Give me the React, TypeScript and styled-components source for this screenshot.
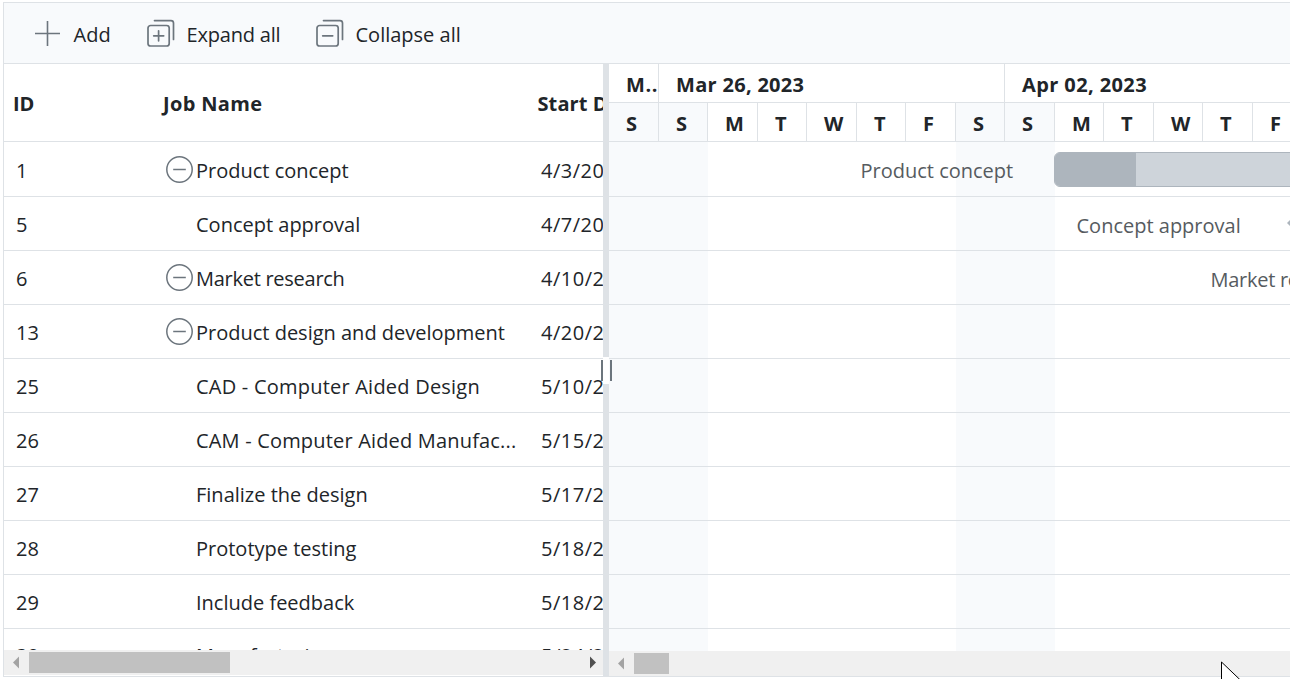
import React from 'react';
import styled, { createGlobalStyle } from 'styled-components';

const LINE = '#dee2e6';
const TINT = '#f8fafc';
const INK = '#212529';
const ICON = '#6c757d';

const GlobalStyle = createGlobalStyle`
  * { box-sizing: border-box; }
  html, body { margin: 0; background: #fff; overflow: hidden; }
  body { font-family: 'Open Sans', 'Noto Sans', sans-serif; font-size: 20px; color: ${INK}; }
`;

const Page = styled.div`
  width: 1290px;
  height: 679px;
  padding: 2px 0 0 3px;
  overflow: hidden;
`;

const Gantt = styled.div`
  width: 1300px;
  height: 675px;
  border: 1px solid ${LINE};
  display: flex;
  flex-direction: column;
`;

const Toolbar = styled.div`
  height: 61px;
  flex: none;
  display: flex;
  align-items: center;
  padding-left: 30px;
  background: ${TINT};
  border-bottom: 1px solid ${LINE};
`;

const Label = styled.span<{ $spacing?: number }>`
  white-space: nowrap;
  letter-spacing: ${(p) => p.$spacing ?? 0}px;
  line-height: 28px;
`;

const ToolButton = styled.button<{ $width: number }>`
  width: ${(p) => p.$width}px;
  height: 40px;
  flex: none;
  display: flex;
  align-items: center;
  gap: 11.5px;
  padding: 0;
  border: 0;
  background: none;
  color: inherit;
  font: inherit;
  svg { flex: none; display: block; }
  ${Label} { padding-top: 3px; }
`;

const Panes = styled.div`
  flex: 1;
  min-height: 0;
  display: flex;
`;

const GridPane = styled.div`
  width: 599px;
  flex: none;
  display: flex;
  flex-direction: column;
  padding-bottom: 1px;
  overflow: hidden;
`;

const GridHeader = styled.div`
  height: 78px;
  flex: none;
  display: grid;
  grid-template-columns: 150px 374.5px 150px;
  align-items: center;
  padding: 3px 0 0 9px;
  border-bottom: 1px solid ${LINE};
  font-weight: 700;
`;

const Rows = styled.div`
  flex: 1;
  min-height: 0;
  overflow: hidden;
`;

const GridRow = styled.div`
  height: 54px;
  display: grid;
  grid-template-columns: 149px 376px 150px;
  align-items: center;
  padding: 2px 0 0 12px;
  border-bottom: 1px solid ${LINE};
  &:first-child { height: 55px; padding-top: 3px; }
  &:last-child { padding-top: 0; }
`;

const NameCell = styled.div`
  display: flex;
  align-items: center;
`;

const Toggle = styled.span`
  width: 31px;
  height: 28px;
  margin-top: -3px;
  flex: none;
`;

const ScrollTrack = styled.div`
  height: 25px;
  flex: none;
  display: flex;
  align-items: center;
  background: #f0f0f0;
`;

const ScrollArrow = styled.svg<{ $width: number }>`
  width: ${(p) => p.$width}px;
  height: 25px;
  flex: none;
  display: block;
`;

const Thumb = styled.div<{ $width: number }>`
  width: ${(p) => p.$width}px;
  height: 21px;
  flex: none;
  background: #c1c1c1;
`;

const Spacer = styled.div`
  flex: 1;
`;

const Splitter = styled.div`
  position: relative;
  width: 6px;
  flex: none;
  background: ${LINE};
`;

const Grip = styled.div`
  position: absolute;
  left: -2px;
  top: 293px;
  width: 11px;
  height: 27px;
  display: flex;
  justify-content: space-between;
  align-items: center;
  background: linear-gradient(#fff, #fff) 2px 0 / 6px 27px no-repeat;
`;

const GripBar = styled.i`
  width: 2px;
  height: 21px;
  background: ${ICON};
`;

const ChartPane = styled.div`
  flex: 1;
  min-width: 0;
  display: flex;
  flex-direction: column;
  overflow: hidden;
`;

const HeaderTier = styled.div`
  height: 39px;
  flex: none;
  display: flex;
  border-bottom: 1px solid ${LINE};
  font-weight: 700;
`;

const WeekCell = styled.div<{ $width: number }>`
  width: ${(p) => p.$width}px;
  flex: none;
  display: flex;
  align-items: center;
  padding: 4px 0 0 17px;
  overflow: hidden;
  border-right: 1px solid ${LINE};
`;

const DayCell = styled.div<{ $wide: boolean; $weekend: boolean }>`
  width: ${(p) => (p.$wide ? 50 : 49)}px;
  flex: none;
  display: flex;
  align-items: center;
  padding: 3px 0 0 17px;
  border-right: 1px solid ${LINE};
  background: ${(p) => (p.$weekend ? TINT : '#fff')};
`;

const ChartRows = styled(Rows)`
  background:
    linear-gradient(${TINT}, ${TINT}) 0 0 / 99px 100% no-repeat,
    linear-gradient(${TINT}, ${TINT}) 347px 0 / 99px 100% no-repeat,
    #fff;
`;

const ChartRow = styled.div<{ $first?: boolean; $indent: number }>`
  height: ${(p) => (p.$first ? 55 : 54)}px;
  display: flex;
  align-items: center;
  padding: ${(p) => (p.$first ? 3 : 5)}px 0 0 ${(p) => p.$indent}px;
  border-bottom: 1px solid ${LINE};
  color: #565b60;
`;

const TaskLabel = styled.div<{ $width: number }>`
  width: ${(p) => p.$width}px;
  flex: none;
  display: flex;
`;

const TaskBar = styled.div`
  width: 280px;
  height: 35px;
  margin-top: -3px;
  flex: none;
  overflow: hidden;
  border: 1px solid #adb5bd;
  border-radius: 6px;
  background: #ced4da;
`;

const Progress = styled.div`
  width: 81px;
  height: 100%;
  background: #adb5bd;
`;

const Milestone = styled.div`
  width: 24px;
  height: 24px;
  margin-top: -7px;
  flex: none;
  transform: rotate(45deg);
  background: #adb5bd;
`;

const Pointer = styled.svg`
  position: absolute;
  left: 1220px;
  top: 661px;
  width: 22px;
  height: 18px;
`;

const AddIcon = () => (
  <svg width="28" height="28" fill="none" stroke={ICON} strokeWidth="1.6">
    <path d="M1 14.5H26M13.5 2V27" />
  </svg>
);

const StackIcon = ({ plus }: { plus?: boolean }) => (
  <svg width="28" height="28" fill="none" stroke={ICON} strokeWidth="1.7" strokeLinecap="round">
    <rect x="1" y="6.5" width="21.2" height="20.5" rx="2.6" />
    <path d="M7.5 1.6H24Q26.5 1.6 26.5 4.1V20.4" />
    <path d={plus ? 'M6.7 16.8H16.7M11.6 11.8V21.8' : 'M6.7 16.8H16.7'} />
  </svg>
);

const CollapseIcon = () => (
  <svg width="28" height="28" fill="none" stroke={ICON} strokeWidth="1.5">
    <circle cx="14.5" cy="14.5" r="12.7" />
    <path d="M8.2 14.5H20.8" />
  </svg>
);

interface Job {
  id: number;
  name: string;
  start: string;
  parent?: boolean;
  spacing?: number;
}

const jobs: Job[] = [
  { id: 1, name: 'Product concept', start: '4/3/2023', parent: true },
  { id: 5, name: 'Concept approval', start: '4/7/2023' },
  { id: 6, name: 'Market research', start: '4/10/2023', parent: true, spacing: -0.27 },
  { id: 13, name: 'Product design and development', start: '4/20/2023', parent: true },
  { id: 25, name: 'CAD - Computer Aided Design', start: '5/10/2023', spacing: 0.22 },
  { id: 26, name: 'CAM - Computer Aided Manufac...', start: '5/15/2023', spacing: 0.18 },
  { id: 27, name: 'Finalize the design', start: '5/17/2023' },
  { id: 28, name: 'Prototype testing', start: '5/18/2023' },
  { id: 29, name: 'Include feedback', start: '5/18/2023' },
  { id: 30, name: 'Manufacturing', start: '5/24/2023' },
];

const days = ['S', 'S', 'M', 'T', 'W', 'T', 'F', 'S', 'S', 'M', 'T', 'W', 'T', 'F', 'S'];

export default function App() {
  return (
    <Page>
      <GlobalStyle />
      <Gantt>
        <Toolbar>
          <ToolButton $width={113}><AddIcon /><Label>Add</Label></ToolButton>
          <ToolButton $width={169}><StackIcon plus /><Label $spacing={-0.2}>Expand all</Label></ToolButton>
          <ToolButton $width={160}><StackIcon /><Label>Collapse all</Label></ToolButton>
        </Toolbar>
        <Panes>
          <GridPane>
            <GridHeader>
              <Label>ID</Label>
              <Label $spacing={0.35}>Job Name</Label>
              <Label $spacing={0.1}>Start Date</Label>
            </GridHeader>
            <Rows>
              {jobs.map((job) => (
                <GridRow key={job.id}>
                  <Label>{job.id}</Label>
                  <NameCell>
                    <Toggle>{job.parent && <CollapseIcon />}</Toggle>
                    <Label $spacing={job.spacing}>{job.name}</Label>
                  </NameCell>
                  <Label $spacing={0.5}>{job.start}</Label>
                </GridRow>
              ))}
            </Rows>
            <ScrollTrack>
              <ScrollArrow $width={25} viewBox="0 0 25 25"><path d="M9 12.5L15 6.5V18.5Z" fill="#a3a3a3" /></ScrollArrow>
              <Thumb $width={201} />
              <Spacer />
              <ScrollArrow $width={18} viewBox="0 0 18 25"><path d="M11 12.5L5 6.5V18.5Z" fill="#505050" /></ScrollArrow>
            </ScrollTrack>
          </GridPane>
          <Splitter>
            <Grip><GripBar /><GripBar /></Grip>
          </Splitter>
          <ChartPane>
            <HeaderTier>
              <WeekCell $width={50}><Label $spacing={0.6}>M..</Label></WeekCell>
              <WeekCell $width={346}><Label $spacing={0.3}>Mar 26, 2023</Label></WeekCell>
              <WeekCell $width={346}><Label $spacing={0.4}>Apr 02, 2023</Label></WeekCell>
            </HeaderTier>
            <HeaderTier>
              {days.map((day, i) => (
                <DayCell key={i} $wide={i % 2 === 0} $weekend={day === 'S'}><Label>{day}</Label></DayCell>
              ))}
            </HeaderTier>
            <ChartRows>
              <ChartRow $first $indent={251.5}>
                <TaskLabel $width={193.5}><Label>Product concept</Label></TaskLabel>
                <TaskBar><Progress /></TaskBar>
              </ChartRow>
              <ChartRow $indent={467.5}>
                <TaskLabel $width={215.5}><Label>Concept approval</Label></TaskLabel>
                <Milestone />
              </ChartRow>
              <ChartRow $indent={601.5}>
                <TaskLabel $width={160}><Label $spacing={-0.27}>Market research</Label></TaskLabel>
              </ChartRow>
              {jobs.slice(3).map((job) => (
                <ChartRow key={job.id} $indent={0} />
              ))}
            </ChartRows>
            <ScrollTrack>
              <ScrollArrow $width={25} viewBox="0 0 25 25"><path d="M9 12.5L15 6.5V18.5Z" fill="#a3a3a3" /></ScrollArrow>
              <Thumb $width={35} />
            </ScrollTrack>
          </ChartPane>
        </Panes>
      </Gantt>
      <Pointer viewBox="0 0 22 18">
        <path d="M1.5 1V30L8 24L24 22.5Z" fill="#fff" stroke="#000" strokeWidth="1" />
      </Pointer>
    </Page>
  );
}
